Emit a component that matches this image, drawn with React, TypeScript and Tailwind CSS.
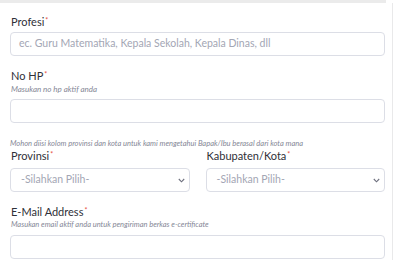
import React from "react";

const Req = () => <span className="text-[#e74a3b] text-[7px] align-top relative top-[-2px] ml-[1px]">*</span>;

const Chevron = () => (
  <svg width="7" height="5" viewBox="0 0 7 5" className="shrink-0">
    <path d="M0.8 1 L3.5 3.8 L6.2 1" fill="none" stroke="#6e707e" strokeWidth="1.1" />
  </svg>
);

const labelCls = "text-[11px] leading-[14px] text-[#2f3038] font-normal pl-[1px]";
const hintCls = "text-[7.5px] leading-[12px] italic text-[#858796] pl-[1px]";
const boxCls = "h-[24px] border border-[#dcdee6] rounded-[4px]";

export default function App() {
  return (
    <div className="w-[399px] h-[260px] overflow-hidden bg-white relative" style={{ fontFamily: "Lato, 'Noto Sans', sans-serif" }}>
      <div className="h-[3px] w-[386px] bg-[#ebebeb]" />
      <div className="w-[393px] border-r border-[#e9e9ea] pl-[10px] pr-[7px] pt-[12px] h-[257px]">
        <div className={labelCls}>Profesi<Req /></div>
        <div className={`mt-[3px] ${boxCls} flex items-center pl-[8px] text-[10.5px] text-[#a3a6b4]`}>
          ec. Guru Matematika, Kepala Sekolah, Kepala Dinas, dll
        </div>
        <div className={`mt-[13px] ${labelCls}`}>No HP<Req /></div>
        <div className={`${hintCls} text-[8px]`}>Masukan no hp aktif anda</div>
        <div className={`mt-[4px] ${boxCls}`} />
        <div className="mt-[15px] text-[7.5px] leading-[11px] italic text-[#858796]">
          Mohon diisi kolom provinsi dan kota untuk kami mengetahui Bapak/Ibu berasal dari kota mana
        </div>
        <div className="grid grid-cols-2 gap-x-[16px]">
          <div>
            <div className={labelCls}>Provinsi<Req /></div>
            <div className={`mt-[5px] ${boxCls} flex items-center justify-between pl-[10px] pr-[4px] text-[10.5px] text-[#a3a6b4]`}>
              <span>-Silahkan Pilih-</span>
              <Chevron />
            </div>
          </div>
          <div>
            <div className={labelCls}>Kabupaten/Kota<Req /></div>
            <div className={`mt-[5px] ${boxCls} flex items-center justify-between pl-[10px] pr-[4px] text-[10.5px] text-[#a3a6b4]`}>
              <span>-Silahkan Pilih-</span>
              <Chevron />
            </div>
          </div>
        </div>
        <div className={`mt-[13px] ${labelCls}`}>E-Mail Address<Req /></div>
        <div className={hintCls}>Masukan email aktif anda untuk pengiriman berkas e-certificate</div>
        <div className={`mt-[4px] ${boxCls}`} />
      </div>
    </div>
  );
}
